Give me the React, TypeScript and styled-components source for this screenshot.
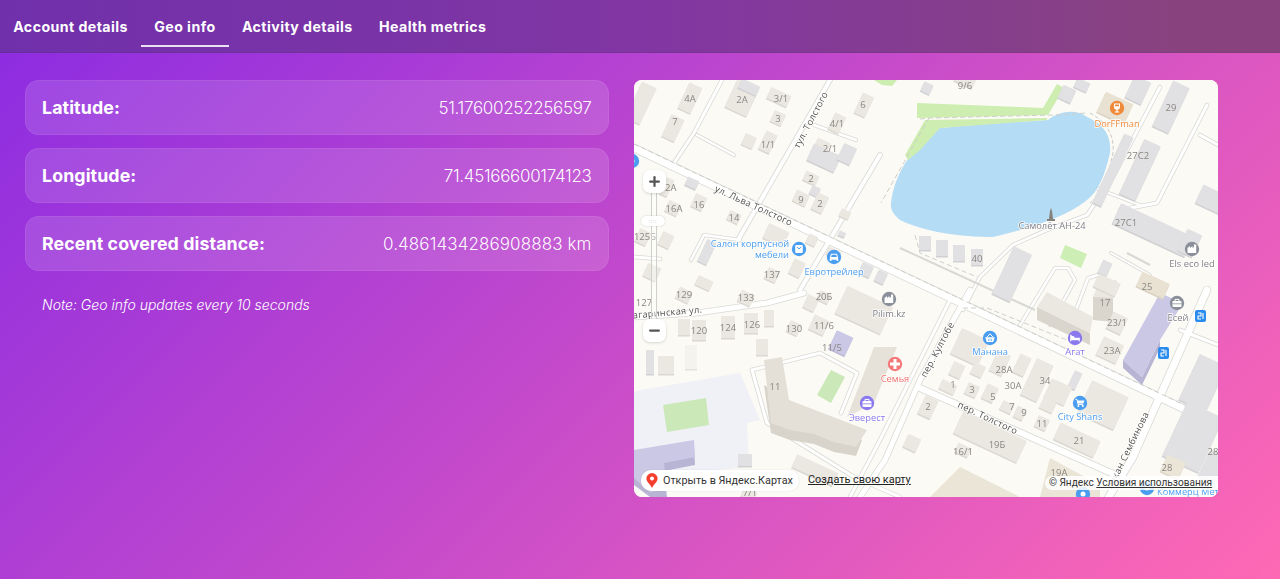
import React from "react";
import styled, { createGlobalStyle } from "styled-components";
import { Plus, Minus } from "lucide-react";

const Global = createGlobalStyle`
  html, body { margin: 0; padding: 0; height: 100%; }
  body { font-family: Inter, "Open Sans", sans-serif; color: #fff; }
`;
const Page = styled.div`
  width: 1280px; height: 579px; overflow: hidden;
  background: linear-gradient(135deg, #8a2be2 0%, #ff69b4 100%);
`;
const TabBar = styled.nav`
  height: 53px; display: flex; box-sizing: border-box;
  background: linear-gradient(90deg, #7030ab 0%, #8136a3 50%, #88437f 92%);
  border-bottom: 1px solid rgba(0, 0, 0, 0.06);
`;
const Tab = styled.div<{ $active?: boolean }>`
  height: 47px; box-sizing: border-box; padding: 18px 13.2px 0; font-size: 14.2px; font-weight: 700;
  letter-spacing: 0.42px; line-height: 17px; white-space: nowrap;
  border-bottom: 2px solid ${(p) => (p.$active ? "rgba(255,255,255,.85)" : "transparent")};
`;
const Content = styled.main`
  display: grid; grid-template-columns: 584px 584px; gap: 25px; padding: 27px 0 0 25px;
`;
const Column = styled.section`
  display: flex; flex-direction: column; gap: 13px;
`;
const Card = styled.div`
  height: 55px; box-sizing: border-box; padding: 0 16.5px 0 16px; display: flex; align-items: center;
  justify-content: space-between; border-radius: 14px; background: rgba(255, 255, 255, 0.13);
  border: 1px solid rgba(255, 255, 255, 0.07);
`;
const Label = styled.span`
  font-size: 17.8px; font-weight: 700; letter-spacing: 0.1px;
`;
const Value = styled.span<{ $tight?: boolean }>`
  font-size: 17px; font-weight: 300; letter-spacing: ${(p) => (p.$tight ? "-0.32px" : "0.1px")};
  color: rgba(255, 255, 255, 0.97);
`;
const Note = styled.p`
  margin: 11px 0 0 17px; font-size: 14px; font-style: italic; font-weight: 300; line-height: 20px;
`;
const MapFrame = styled.div`
  position: relative; width: 584px; height: 417px; border-radius: 8px; overflow: hidden;
  background: #fbfaf5; font-family: Roboto, "Open Sans", sans-serif;
`;
const MapCanvas = styled.svg`
  display: block; width: 584px; height: 417px; font-family: "Open Sans", Roboto, sans-serif;
`;
const ZoomButton = styled.div<{ $top: number }>`
  position: absolute; left: 9px; top: ${(p) => p.$top}px; width: 23px; height: 23px; border-radius: 7px;
  background: #fff; color: #555; display: flex; align-items: center; justify-content: center;
  box-shadow: 0 1px 3px rgba(0,0,0,.15);
`;
const Track = styled.div`
  position: absolute; left: 17px; top: 110px; width: 6px; height: 132px; background: rgba(255,255,255,.35);
  border-left: 1px solid #cfcfcc; border-right: 1px solid #cfcfcc; box-sizing: border-box;
`;
const Handle = styled.div`
  position: absolute; left: 7px; top: 136px; width: 24px; height: 10px; border-radius: 5px;
  background: #fff; box-shadow: 0 0 2px rgba(0,0,0,.2); color: #999; font-size: 6px; line-height: 9px;
  text-align: center; letter-spacing: 0.5px;
`;
const OpenPill = styled.div`
  position: absolute; left: 7px; top: 390px; height: 21px; width: 158px; box-sizing: border-box; padding-left: 5px;
  border-radius: 10px; background: #fff; display: flex; align-items: center; gap: 5px;
  font-size: 10.8px; color: #333; white-space: nowrap; box-shadow: 0 0 2px rgba(0,0,0,.1);
`;
const CreateLink = styled.span`
  position: absolute; left: 174px; top: 393px; font-size: 10.9px; line-height: 14px; color: #222; text-decoration: underline;
  white-space: nowrap;
`;
const Legal = styled.div`
  position: absolute; right: 0; top: 396px; height: 14px; width: 173px; box-sizing: border-box; padding-left: 4px;
  background: rgba(255,255,255,.85); border-radius: 7px 0 0 7px; font-size: 10.1px; line-height: 14px; color: #333;
  white-space: nowrap;
`;
const LegalLink = styled.span`
  text-decoration: underline;
`;

type B = [number, number, number, number, number?, string?];
const BEIGE = "#ebe8e1", GRAY = "#e1e1e3", PURPLE = "#cbc8e6", TAN = "#e9e1d2";
const buildings: B[] = [
  [641,103,16,40,25],[690,98,14,28,25],[673,128,14,24,25],[742,98,24,30,25],[749,87,20,10,25,GRAY],
  [779,97,22,12,25],[778,118,12,12,25],[768,142,12,20,25],[749,141,12,12,25],[864,105,12,22,25],
  [837,123,12,18,25],[822,146,14,12,25],[824,158,30,18,25,GRAY],[847,154,14,18,25,GRAY],[811,178,14,10,25],
  [815,191,9,9,25,GRAY],[801,198,14,12,25],[820,203,12,18,25],[845,214,10,8,25],[842,234,7,5,25,GRAY],
  [925,243,12,14,0,GRAY],[692,183,12,9,25,GRAY],[667,187,8,18,25],[673,208,13,12,25],[699,202,12,14,25],
  [734,217,12,10,25],[666,240,12,14,25],[643,237,12,14,25],[707,252,10,24,25,GRAY],[776,235,22,16,25],
  [812,240,10,10,25],[797,268,12,16,25],[772,275,12,12,25],[652,272,14,14,25],[704,283,16,10,25],
  [866,270,12,12,25,GRAY],[881,277,10,12,25,GRAY],[834,253,14,8,25],
  [927,88,10,10,25,GRAY],[965,80,20,10,25],[1067,94,14,14,25,GRAY],[1082,85,14,10,25,GRAY],
  [1115,108,30,22,25,TAN],[1138,90,18,24,25,GRAY],[1171,107,18,50,25,GRAY],[1140,170,18,60,25,GRAY],
  [1113,170,10,76,25,GRAY],[1213,200,30,20,25,GRAY],[1153,230,80,22,25,GRAY],[1190,243,16,24,25,GRAY],
  [942,248,12,16,0,GRAY],[959,253,12,16,0,GRAY],[977,257,12,16,0,GRAY],
  [1012,274,20,52,25,GRAY],[1105,268,10,14,25,GRAY],[1107,285,24,14,25],[1153,285,30,16,25,TAN],
  [684,295,14,12,25],[746,298,14,12,25],[811,303,12,14,25],[864,310,50,30,25],[824,297,12,10,25],
  [819,325,16,16,25],[684,327,12,16,0],[699,330,14,20,0],[728,327,14,22,0],[751,323,14,20,0],[769,318,10,16,0],
  [794,328,12,12,25],[762,347,12,16,0],[841,343,18,20,25,PURPLE],[666,365,16,18,0],[650,362,8,24,0,GRAY],
  [691,357,12,24,0,"#f5f3ee"],
  [1117,323,16,18,25],[1110,350,22,20,25],[1075,380,8,18,25,GRAY],
  [970,347,30,28,25],[957,370,12,14,25],[978,370,12,12,25],[1000,363,14,22,25],[1022,365,12,20,25],
  [948,387,16,10,25],[972,390,12,12,25],[990,393,12,16,25],[1007,407,12,10,25],[1020,413,10,12,25],
  [1037,380,18,40,25],[1058,392,22,20,25],[1048,405,14,12,25],[1042,423,12,12,25],[1103,405,40,36,25],
  [1077,440,44,18,25],[990,437,70,24,25],[963,450,14,10,25],[928,407,14,20,25],[1203,383,30,50,25,GRAY],
  [1193,437,40,60,25,GRAY],[1173,467,20,18,25,"#ebe5d8"],[1213,467,20,30,25,GRAY],
  [815,470,45,14,25],[745,460,14,12,0,GRAY],[912,443,14,14,25],[749,494,14,10,25],
];
const polys: [string, string][] = [
  ["641,390 740,373 760,420 747,423 749,467 634,477 634,392", "#f0f0f7"],
  ["663,405 706,398 709,425 667,432", "#cbe8b8"],
  ["831,370 845,377 831,403 817,395", "#cbe8b8"],
  ["1065,245 1087,254 1081,268 1060,258", "#cdeeb4"],
  ["634,458 694,448 695,465 664,471 667,497 650,497 634,485", "#b8b5d4"],
  ["634,450 694,440 695,457 664,463 667,490 650,492 634,478", PURPLE],
  ["764,385 771,433 790,440 814,444 834,452 856,456 862,440 789,400", "#d9d4cb"],
  ["764,360 782,357 789,400 867,430 856,447 834,442 814,434 790,430 771,423", "#e4e0d8"],
  ["847,417 874,347 897,347 874,403", "#e6e2da"],
  ["1123,368 1142,385 1160,348 1160,340 1142,377 1123,360", "#b8b5d4"],
  ["1123,360 1160,293 1183,303 1160,340 1142,377", PURPLE],
  ["930,497 960,467 1020,497", "#ebe5d8"],
  ["1040,497 1050,458 1100,485 1100,497", "#ebe5d8"],
  ["917,103 1043,108 1057,84 1064,88 1048,115 917,118", "#cdeeb0"],
  ["1047,118 1047,120 940,128 920,150 908,160 905,155 925,120", "#cdeeb0"],
  ["874,80 897,80 892,86 882,85", "#cdeeb0"],
  ["1037,320 1090,345 1090,333 1037,307", "#dad6ce"],
  ["1047,292 1093,317 1090,333 1037,307", "#ebe8e1"],
  ["1093,320 1113,322 1113,296 1093,297", "#dad6ce"],
  ["1093,297 1100,280 1117,280 1113,298", "#ebe8e1"],
];
const roads: [string, number][] = [
  ["634,148 1218,425", 7],
  ["830,80 738,240", 4],["880,155 800,290", 4],["722,80 694,133 674,163", 3],["697,135 734,155", 2.5],
  ["814,125 856,140", 2.5],["691,260 704,235 740,240", 2.5],
  ["634,317 697,313 767,303 804,293", 5],
  ["920,388 1037,440 1127,480", 6],
  ["1207,290 1133,457 1107,500", 7],["1207,105 1157,203 1120,210", 3],
  ["1160,87 1113,177 1087,215", 3],["1087,215 1047,230 1013,245 980,277 963,310", 2.5],
  ["970,290 920,380 885,460 860,497", 5],["950,300 880,440 850,497", 3],
  ["752,370 820,353 857,373 841,413", 3],["752,370 767,423 854,477 900,497", 3],
  ["1020,325 1055,268 1068,268 1075,280 1050,325", 2.5],["1073,318 1088,278 1098,275", 2.5],
  ["1111,253 1150,275", 2],["1200,135 1218,145", 3],["1075,180 1140,205", 2],
  ["1218,345 1180,330", 3],["634,257 660,259", 3],
];
const fences: string[] = ["900,248 1035,310", "1127,253 1150,265"];
const dashes: string[] = [
  "915,235 920,253 977,277", "963,308 987,308 1067,340", "634,144 1218,421",
  "920,119 930,118 1053,115 1087,113", "929,118 881,203",
];
type L = [number, number, string];
const HOUSE = "#8a8681";
const labels: L[] = [
  [690,102,"4A"],[675,125,"7"],[742,103,"2A"],[781,102,"3/1"],[778,122,"3"],[768,148,"1/1"],[863,108,"6"],
  [837,127,"4/1"],[830,152,"2/1"],[811,182,"2"],[801,203,"9"],[820,207,"2"],[668,191,"12A"],[674,212,"16A"],
  [699,208,"16"],[734,221,"14"],[645,240,"125Б"],[772,278,"137"],[965,89,"9/6"],[1171,111,"29"],[1138,159,"27С2"],
  [1126,226,"27С1"],[977,262,"40"],[644,306,"127"],[684,298,"129"],[746,301,"133"],[824,300,"20Б"],[824,329,"11/6"],
  [699,334,"120"],[728,331,"124"],[752,328,"126"],[794,332,"130"],[832,351,"11/5"],[775,390,"11"],[1105,306,"17"],
  [1117,326,"23/1"],[1112,354,"23А"],[1004,373,"28А"],[1013,389,"30А"],[1045,384,"34"],[953,388,"1"],[972,393,"3"],
  [993,400,"5"],[1012,410,"7"],[1024,416,"9"],[1042,427,"11"],[1079,444,"21"],[997,448,"19Б"],[963,455,"16/1"],
  [928,410,"2"],[1059,476,"19А"],[1167,471,"28"],[1213,455,"28"],[1147,290,"25"],[750,496,"7/1"],
];
const names: [number, number, string, string][] = [
  [750,247,"Салон корпусной","#4b9df0"],[772,258,"мебели","#4b9df0"],[834,275,"Евротрейлер","#4b9df0"],
  [1117,127,"DorFFman","#ef8a3c"],[1052,229,"Самолёт АН-24","#7f7f85"],[1192,267,"Els eco led","#7f7f85"],
  [889,317,"Pilim.kz","#7f7f85"],[895,382,"Семья","#f0706c"],[867,421,"Эверест","#8a78ee"],
  [990,355,"Манана","#4b9df0"],[1075,355,"Агат","#8a78ee"],[1080,420,"City Shans","#4b9df0"],
  [1178,321,"Есей","#7f7f85"],[1188,495,"Коммерц Мет","#4b9df0"],
];
const roadNames: [number, number, number, string][] = [
  [714,191,24.5,"ул. Льва Толстого"],[799,149,-62,"тул. Толстого"],[628,319,-5,"Гагаринская ул."],
  [926,378,-62,"пер. Култобе"],[957,407,25,"пер. Толстого"],[1112,490,-64,"мукан Сембинова"],
];
type Kind = "box" | "car" | "glass" | "factory" | "cross" | "case" | "basket" | "bed" | "cart" | "plain";
const pins: [number, number, string, Kind][] = [
  [799,249,"#4b9df0","box"],[834,257,"#4b9df0","car"],[1117,108,"#f08a3a","glass"],[1192,249,"#8a8f99","factory"],
  [889,299,"#8a8f99","factory"],[895,364,"#f2787a","cross"],[867,403,"#8a78ee","case"],[990,338,"#4b9df0","basket"],
  [1075,338,"#8a78ee","bed"],[1080,403,"#4b9df0","cart"],[1177,303,"#8a8f99","case"],[1147,488,"#4b9df0","plain"],
  [1083,494,"#4b9df0","plain"],[632,161,"#4b9df0","plain"],
];
const Glyph = ({ kind, c }: { kind: Kind; c: string }) => {
  switch (kind) {
    case "box":
      return <g><rect x="-3.8" y="-4" width="7.6" height="8" rx="1" fill="#fff" /><path d="M-2-2.2L0 0 2-2.2" stroke={c} strokeWidth="1" fill="none" /></g>;
    case "car":
      return <path d="M-4.2 1L-3-3.2H3L4.2 1V4H2.6V2.8H-2.6V4H-4.2ZM-2.2-2.2L-2.9 0H2.9L2.2-2.2Z" fill="#fff" fillRule="evenodd" />;
    case "glass":
      return <path d="M-3-4.5H3V-1C3 .8 1.4 1.5.6 1.6V3.5H2.2V4.5H-2.2V3.5H-.6V1.6C-1.4 1.5-3 .8-3-1ZM-2-3.5V-1.8H2V-3.5Z" fill="#fff" fillRule="evenodd" />;
    case "factory":
      return <path d="M-4.5 4V-1L-2-3V-1L.5-3V-1L2-2V-4.5H4.2V4Z" fill="#fff" />;
    case "cross":
      return <path d="M-1.5-5H1.5V-1.5H5V1.5H1.5V5H-1.5V1.5H-5V-1.5H-1.5Z" fill="#fff" />;
    case "case":
      return <g><rect x="-4.5" y="-2" width="9" height="6" rx="1" fill="#fff" /><path d="M-2-2V-3.6H2V-2" stroke="#fff" fill="none" /><path d="M-4.5 .8H4.5" stroke={c} strokeWidth=".8" /></g>;
    case "basket":
      return <g><path d="M-4.8-.8H4.8L3.2 4H-3.2Z" fill="#fff" /><path d="M-3-.8L0-4.2 3-.8" stroke="#fff" fill="none" /><path d="M-1.5.8V3M0 .8V3M1.5.8V3" stroke={c} strokeWidth=".6" /></g>;
    case "bed":
      return <g><path d="M-4.8-3.2V3.6H-3.8V2.2H3.8V3.6H4.8V-.2H-.6V-1.6L-3.4-2.2V-3.2Z" fill="#fff" /></g>;
    case "cart":
      return <g><path d="M-4.6-3.6H-3L-2 1.4H3.2" stroke="#fff" fill="none" /><path d="M-2.7-2.5H4.4L3.4.4H-2.1Z" fill="#fff" /><circle cx="-1.6" cy="3" r="1" fill="#fff" /><circle cx="2.8" cy="3" r="1" fill="#fff" /></g>;
    default:
      return <circle r="2.5" fill="#fff" />;
  }
};

const MapDrawing = () => (
  <MapCanvas viewBox="634 80 584 417">
    <defs>
      <filter id="soft" x="-2%" y="-2%" width="104%" height="104%"><feGaussianBlur stdDeviation="0.35" /></filter>
    </defs>
    <g filter="url(#soft)">
      <rect x="634" y="80" width="584" height="417" fill="#fbfaf5" />
      {polys.slice(0, 1).map(([p, f]) => <polygon key={p} points={p} fill={f} />)}
      {roads.map(([p, w]) => <polyline key={"c" + p} points={p} fill="none" stroke="#d9d9d5" strokeWidth={w + 1.6} strokeLinejoin="round" strokeLinecap="round" />)}
      {roads.map(([p, w]) => <polyline key={"r" + p} points={p} fill="none" stroke="#fff" strokeWidth={w} strokeLinejoin="round" strokeLinecap="round" />)}
      {fences.map((p) => <polyline key={p} points={p} fill="none" stroke="#d8d8d4" strokeWidth="2" />)}
      <path d="M891 203C895 170 915 145 940 128C980 124 1020 122 1048 120C1058 112 1075 108 1087 117C1100 123 1112 132 1110 153C1105 175 1098 192 1087 200C1070 214 1040 226 993 237C960 237 925 232 900 220C894 215 890 210 891 203Z" fill="#b5dcf5" />
      <path d="M1090 113C1103 120 1115 132 1113 153C1108 177 1100 195 1090 203" fill="none" stroke="#cbcbc7" strokeWidth="1" strokeDasharray="4 2" />
      {polys.slice(1).map(([p, f]) => <polygon key={p} points={p} fill={f} />)}
      {dashes.map((p) => <polyline key={p} points={p} fill="none" stroke="#cfcfcb" strokeWidth="1" strokeDasharray="5 3" />)}
      {buildings.map(([x, y, w, h, a = 0, f = BEIGE]) => (
        <g key={`${x}-${y}`} transform={`rotate(${a} ${x} ${y})`}>
          <rect x={x - w / 2} y={y - h / 2 + 1.5} width={w} height={h} fill={f} style={{ filter: "brightness(.93)" }} />
          <rect x={x - w / 2} y={y - h / 2} width={w} height={h} fill={f} />
        </g>
      ))}
      {labels.map(([x, y, t]) => <text key={`${x}${y}${t}`} x={x} y={y} fontSize="9.5" fill={HOUSE} textAnchor="middle">{t}</text>)}
      {roadNames.map(([x, y, a, t]) => <text key={t} x={x} y={y} transform={`rotate(${a} ${x} ${y})`} fontSize="9.2" fill="#55534f" letterSpacing=".3" stroke="#fff" strokeWidth="1.6" paintOrder="stroke">{t}</text>)}
      {names.map(([x, y, t, c]) => (
        <text key={t} x={x} y={y} fontSize="9.3" fontWeight="500" fill={c} textAnchor="middle" stroke="#fff" strokeWidth="1.4" paintOrder="stroke">{t}</text>
      ))}
      {pins.map(([x, y, c, kind]) => (
        <g key={`${x}${y}`} transform={`translate(${x} ${y})`}>
          <circle r="7.2" fill={c} />
          <Glyph kind={kind} c={c} />
        </g>
      ))}
      <path d="M1049 219l1-8 1-3 1 3 1 8h2v2h-8v-2z" fill="#85817c" />
      <g fill="#2b8cee">
        <rect x="1195" y="310" width="11" height="12" rx="2" /><rect x="1158" y="347" width="11" height="12" rx="2" />
      </g>
      <g stroke="#fff" strokeWidth="1.1" fill="none">
        <path d="M1198 313h3v3h-3v3h3M1203 313v6M1161 350h3v3h-3v3h3M1166 350v6" />
      </g>
    </g>
  </MapCanvas>
);

export default function App() {
  return (
    <Page>
      <Global />
      <TabBar>
        <Tab>Account details</Tab>
        <Tab $active>Geo info</Tab>
        <Tab>Activity details</Tab>
        <Tab>Health metrics</Tab>
      </TabBar>
      <Content>
        <Column>
          <Card><Label>Latitude:</Label><Value $tight>51.17600252256597</Value></Card>
          <Card><Label>Longitude:</Label><Value $tight>71.45166600174123</Value></Card>
          <Card><Label>Recent covered distance:</Label><Value>0.4861434286908883 km</Value></Card>
          <Note>Note: Geo info updates every 10 seconds</Note>
        </Column>
        <MapFrame>
          <MapDrawing />
          <Track />
          <ZoomButton $top={90}><Plus size={15} strokeWidth={3.6} /></ZoomButton>
          <Handle>::::</Handle>
          <ZoomButton $top={239}><Minus size={15} strokeWidth={3.6} /></ZoomButton>
          <OpenPill>
            <svg width="12" height="15" viewBox="0 0 12 15"><path d="M6 0a5.6 5.6 0 0 1 5.6 5.6C11.6 9 8 11 6 15 4 11 .4 9 .4 5.6A5.6 5.6 0 0 1 6 0z" fill="#f43f2f" /><circle cx="6" cy="5.6" r="2" fill="#fff" /></svg>
            Открыть в Яндекс.Картах
          </OpenPill>
          <CreateLink>Создать свою карту</CreateLink>
          <Legal>© Яндекс <LegalLink>Условия использования</LegalLink></Legal>
        </MapFrame>
      </Content>
    </Page>
  );
}
